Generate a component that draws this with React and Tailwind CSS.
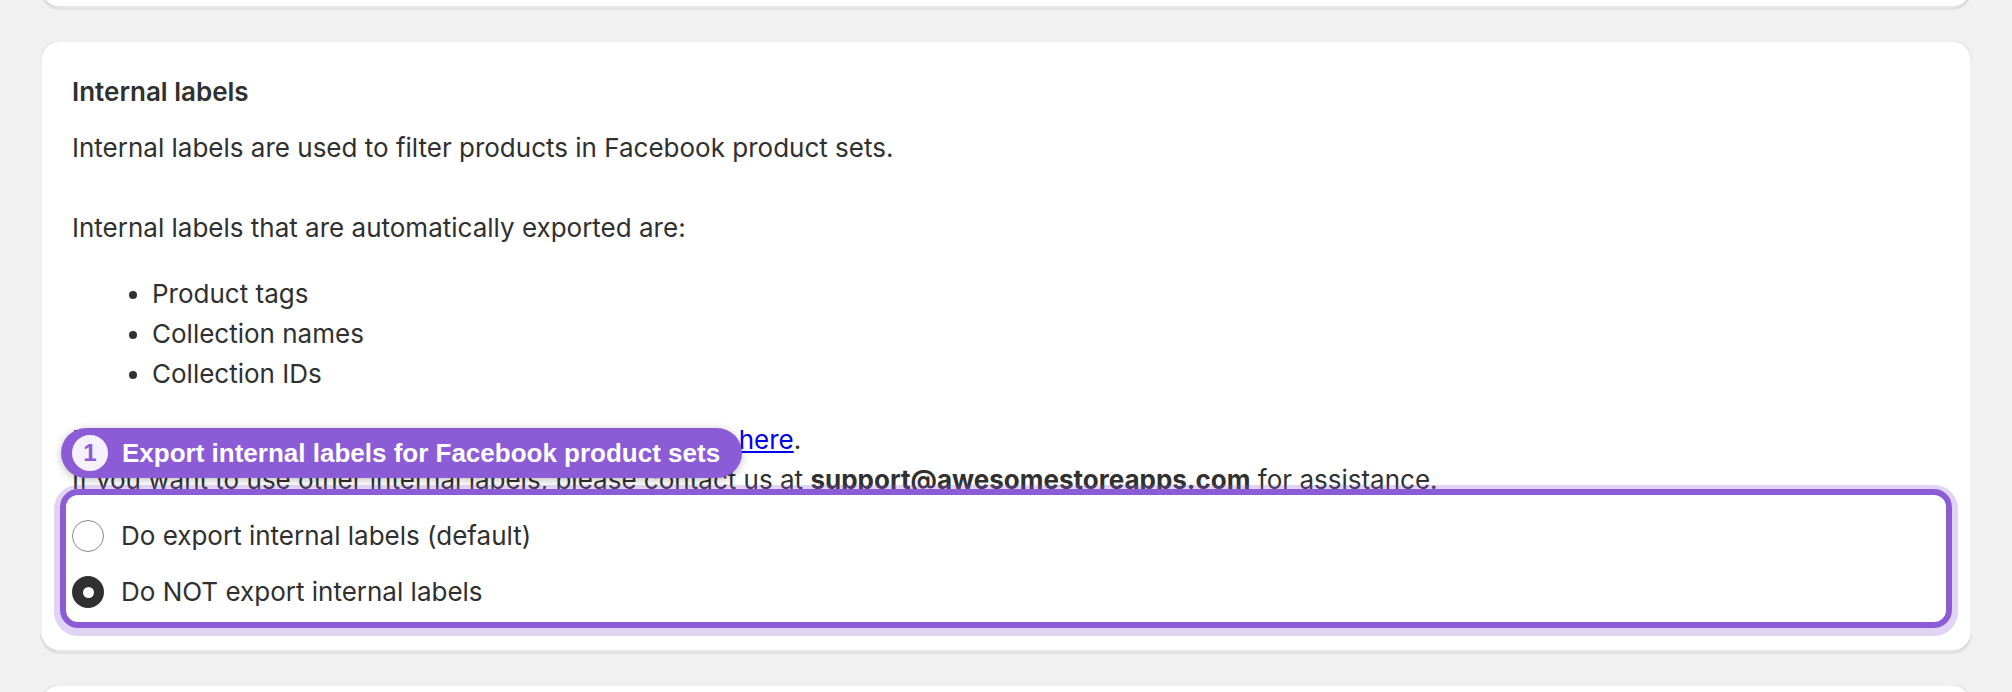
import React from "react";

const options = [
  { id: "export", label: "Do export internal labels (default)", checked: false },
  { id: "no-export", label: "Do NOT export internal labels", checked: true },
];

function Radio({ checked }) {
  if (checked) {
    return (
      <span className="flex h-8 w-8 shrink-0 items-center justify-center rounded-full bg-[#303030]">
        <span className="h-[11px] w-[11px] rounded-full bg-white" />
      </span>
    );
  }
  return <span className="h-8 w-8 shrink-0 rounded-full border border-[#8a8a8a] bg-white" />;
}

function Card({ children, className = "" }) {
  return (
    <div
      className={`rounded-[20px] bg-white shadow-[0_2px_0_0_rgba(26,26,26,0.07),inset_0_-2px_0_0_rgba(0,0,0,0.1),inset_2px_0_0_0_rgba(0,0,0,0.06),inset_-2px_0_0_0_rgba(0,0,0,0.06),inset_0_2px_0_0_rgba(0,0,0,0.06)] ${className}`}
    >
      {children}
    </div>
  );
}

export default function App() {
  return (
    <div className="h-[692px] overflow-hidden bg-[#f1f1f2] font-['Inter',sans-serif] text-[26px] leading-[40px] text-[#303030]">
      <div className="flex flex-col gap-8 px-10">
        {/* previous section, only its bottom edge shows */}
        <Card className="-mt-[32px] h-[40px]" />

        <Card className="p-8">
          <h2 className="font-semibold">Internal labels</h2>
          <div className="mt-4">
            <p>
              Internal labels are used to filter products in Facebook product sets.
              <br />
              <br />
              Internal labels that are automatically exported are:
            </p>
            <ul className="my-[26px] list-disc pl-[80px]">
              <li>Product tags</li>
              <li>Collection names</li>
              <li>Collection IDs</li>
            </ul>
            <p>
              For more information about internal labels, please see{" "}
              <a href="#" className="text-[#0000ee] underline">
                here
              </a>
              .
              <br />
              If you want to use other internal labels, please contact us at{" "}
              <b className="font-bold">support@awesomestoreapps.com</b> for assistance.
            </p>

            <div className="relative mt-4 flex flex-col gap-4 pb-2">
              {options.map((opt) => (
                <label key={opt.id} className="flex h-10 items-center gap-[17px]">
                  <Radio checked={opt.checked} />
                  <span>{opt.label}</span>
                </label>
              ))}

              {/* highlight around the choice list */}
              <div className="pointer-events-none absolute -top-[27px] -bottom-[8px] -left-[12px] -right-[12px] rounded-[18px] border-[6px] border-[#8c5bd6] shadow-[0_2px_0_6px_rgba(140,91,214,0.27)]" />

              <div className="absolute -top-[88px] -left-[11px] flex h-[50px] items-center gap-[14px] rounded-full bg-[#8c5bd6] pl-[11px] pr-[22px] font-['Liberation_Sans',Arial,sans-serif] shadow-[0_2px_8px_rgba(0,0,0,0.25)]">
                <span className="flex h-9 w-9 items-center justify-center rounded-full bg-[#f6f1fd] text-[24px] font-bold leading-none text-[#8c5bd6]">
                  1
                </span>
                <span className="whitespace-nowrap text-[26px] font-bold leading-none text-white">
                  Export internal labels for Facebook product sets
                </span>
              </div>
            </div>
          </div>
        </Card>

        <Card className="h-[200px]" />
      </div>
    </div>
  );
}
